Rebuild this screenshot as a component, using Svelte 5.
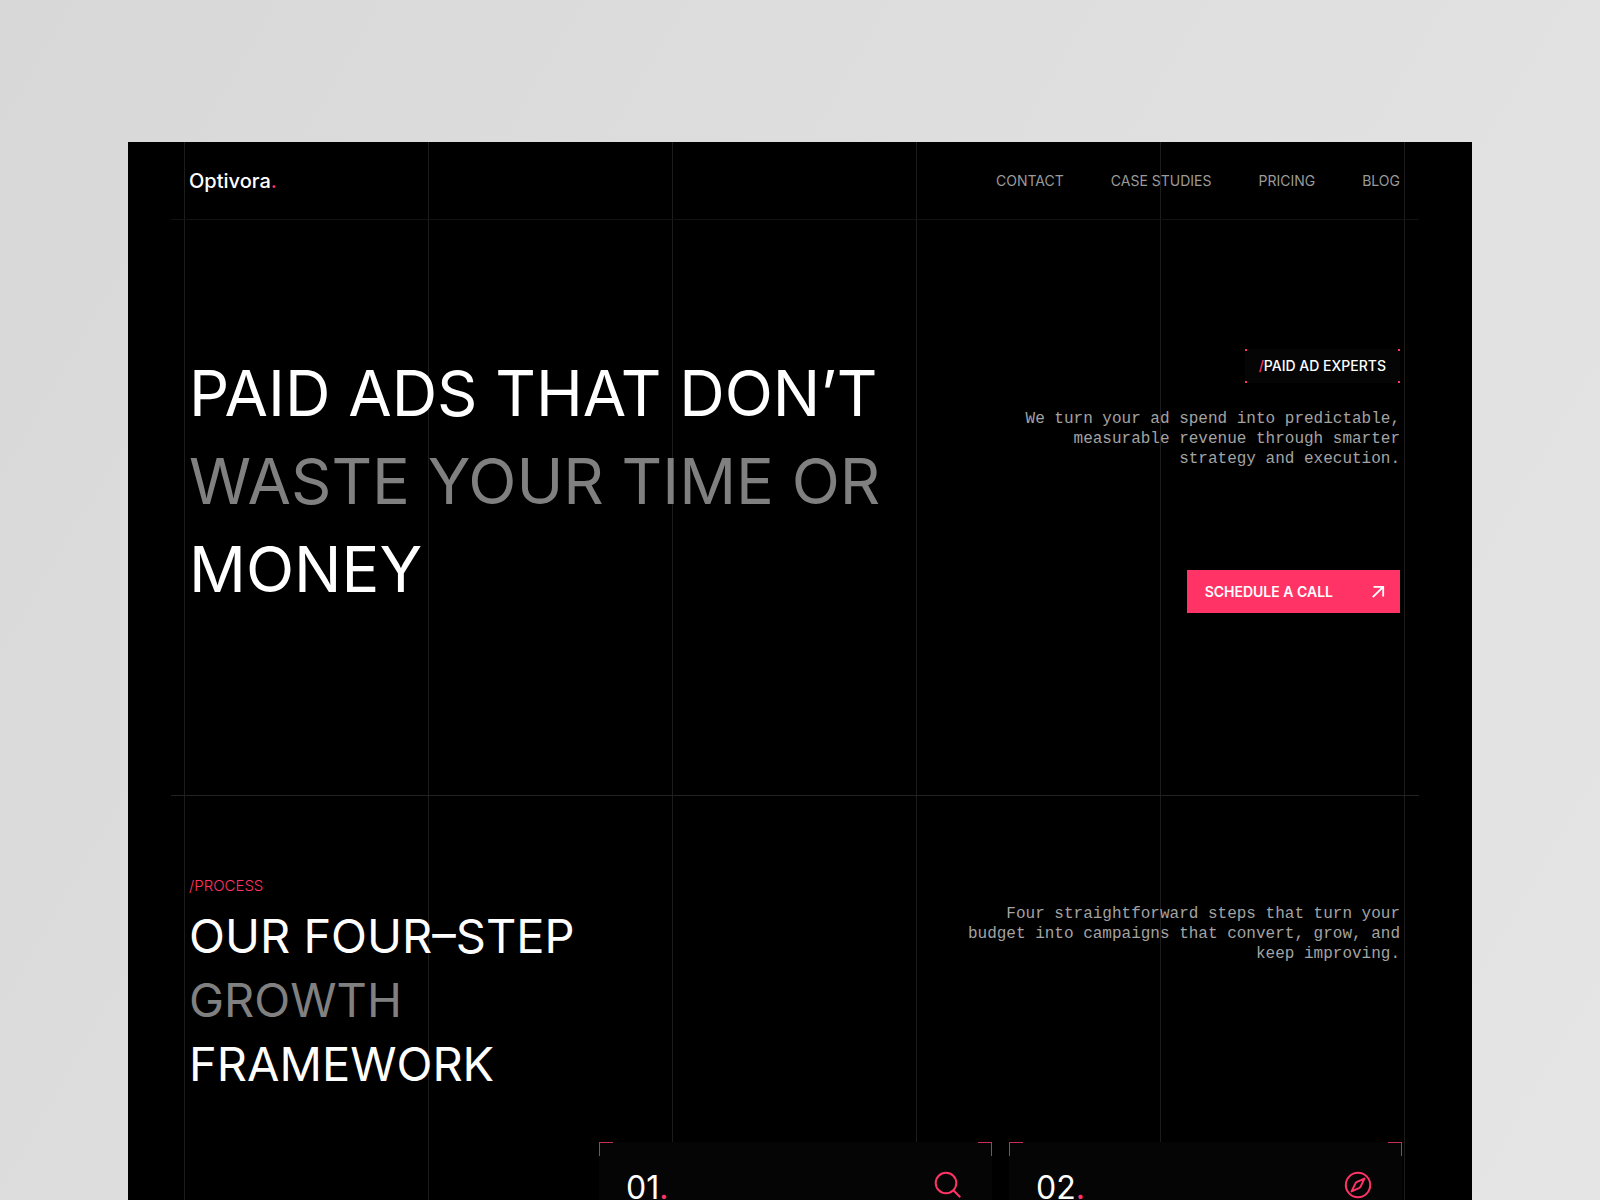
<script lang="ts">
	const navLinks: string[] = ['Contact', 'Case studies', 'Pricing', 'Blog'];

	const steps: { number: string; icon: 'search' | 'compass' }[] = [
		{ number: '01', icon: 'search' },
		{ number: '02', icon: 'compass' }
	];
</script>

<div class="page">
	<div class="panel">
		<div class="guides" aria-hidden="true">
			{#each Array(5) as _}
				<span></span>
			{/each}
		</div>

		<header class="row header">
			<a class="logo" href="/">Optivora<span class="accent">.</span></a>
			<nav>
				{#each navLinks as link}
					<a href="/">{link}</a>
				{/each}
			</nav>
		</header>

		<section class="row hero">
			<h1>
				Paid ads that don’t<br />
				<span class="muted">waste your time or</span><br />
				money
			</h1>
			<div class="hero-side">
				<p class="badge"><span class="accent">/</span>Paid ad experts</p>
				<p class="copy">
					We turn your ad spend into predictable,<br />
					measurable revenue through smarter<br />
					strategy and execution.
				</p>
				<button class="cta" type="button">
					Schedule a call
					<svg width="14" height="14" viewBox="0 0 14 14" aria-hidden="true">
						<path d="M1.8 12.2 12 2M2.5 1.8h9.7v9.7" />
					</svg>
				</button>
			</div>
		</section>

		<section class="row process">
			<p class="label">/Process</p>
			<h2>
				Our four–step<br />
				<span class="muted">growth</span><br />
				framework
			</h2>
			<p class="copy">
				Four straightforward steps that turn your<br />
				budget into campaigns that convert, grow, and<br />
				keep improving.
			</p>
			<div class="cards">
				{#each steps as { number, icon }}
					<article class="card">
						<h3>{number}<span class="accent">.</span></h3>
						<svg class="icon" width="28" height="28" viewBox="0 0 28 28" aria-hidden="true">
							{#if icon === 'search'}
								<circle cx="12" cy="12" r="10.3" />
								<path d="m19.3 19.3 7 7" />
							{:else}
								<circle cx="14" cy="14" r="12.2" />
								<path d="M20.4 7.6 13 10.8q-1.2.6-1.7 1.8L7.6 20.4 15 17.2q1.2-.6 1.7-1.8z" />
							{/if}
						</svg>
					</article>
				{/each}
			</div>
		</section>
	</div>
</div>

<style>
	:global(body) {
		margin: 0;
	}
	.page {
		--pink: #ff3366;
		box-sizing: border-box;
		height: 100vh;
		overflow: hidden;
		padding: 142px 8% 0;
		background: linear-gradient(120deg, #d8d8d8, #dfdfdf 50%, #e5e5e5);
		color: #fff;
		font-family: Inter, 'Liberation Sans', sans-serif;
	}
	.panel {
		position: relative;
		background: #000;
	}
	h1,
	h2,
	h3,
	p {
		margin: 0;
		font-weight: 400;
	}
	a {
		color: inherit;
		text-decoration: none;
	}
	.accent {
		color: var(--pink);
	}
	.muted {
		color: #808080;
	}

	/* Vertical guide lines behind the content */
	.guides {
		position: absolute;
		inset: 0 67px 0 56px;
		display: grid;
		grid-template-columns: repeat(5, 1fr);
		border-right: 1px solid #1c1c1c;
	}
	.guides span {
		border-left: 1px solid #1c1c1c;
	}

	.row {
		position: relative;
		margin: 0 53px 0 43px;
		padding: 0 19px 0 18px;
	}
	.header {
		display: flex;
		align-items: center;
		justify-content: space-between;
		height: 77px;
		border-bottom: 1px solid #121212;
	}
	.logo {
		font-size: 20px;
		font-weight: 500;
	}
	nav {
		display: flex;
		gap: 47px;
		color: #9a9a9a;
		font-size: 14px;
		text-transform: uppercase;
	}

	.hero {
		display: flex;
		justify-content: space-between;
		padding-top: 129px;
		padding-bottom: 182px;
		border-bottom: 1px solid #222;
	}
	h1 {
		font-size: 63px;
		line-height: 88px;
		text-transform: uppercase;
	}
	.hero-side {
		display: flex;
		flex-direction: column;
		align-items: flex-end;
	}
	.badge {
		/* A pink dot in every corner */
		--dot: linear-gradient(var(--pink), var(--pink));
		padding: 0 14px;
		background:
			var(--dot) 0 0 / 2px 2px no-repeat,
			var(--dot) 100% 0 / 2px 2px no-repeat,
			var(--dot) 0 100% / 2px 2px no-repeat,
			var(--dot) 100% 100% / 2px 2px no-repeat,
			#050505;
		font-size: 14px;
		font-weight: 500;
		line-height: 34px;
		text-transform: uppercase;
	}
	.copy {
		color: #a3a3a3;
		font-family: 'Liberation Mono', monospace;
		font-size: 16px;
		line-height: 20px;
		text-align: right;
	}
	.hero-side .copy {
		margin-top: 26px;
	}
	.cta {
		display: flex;
		align-items: center;
		justify-content: space-between;
		gap: 38px;
		height: 43px;
		margin-top: auto;
		padding: 0 15px 0 18px;
		border: 0;
		background: var(--pink);
		color: #fff;
		font-family: inherit;
		font-size: 14px;
		font-weight: 600;
		text-transform: uppercase;
		cursor: pointer;
	}
	.cta svg {
		fill: none;
		stroke: currentColor;
		stroke-width: 1.8;
	}

	.process {
		display: grid;
		grid-template-columns: 1fr auto;
		padding-top: 80px;
	}
	.label {
		grid-column: 1 / -1;
		margin-bottom: 8px;
		color: var(--pink);
		font-size: 15px;
		font-weight: 300;
		line-height: 20px;
		text-transform: uppercase;
	}
	h2 {
		font-size: 47px;
		line-height: 64px;
		text-transform: uppercase;
	}
	.cards {
		grid-column: 1 / -1;
		display: grid;
		grid-template-columns: 1fr 1fr;
		gap: 17px;
		margin: 46px -2px 0 410px;
	}
	.card {
		/* Bracket arms for the two upper corners */
		--arm: linear-gradient(#c62f56, #c62f56);
		display: flex;
		align-items: flex-start;
		justify-content: space-between;
		height: 240px;
		padding: 29px 30px 29px 27px;
		background:
			var(--arm) 0 0 / 14px 1px no-repeat,
			var(--arm) 0 0 / 1px 14px no-repeat,
			var(--arm) 100% 0 / 14px 1px no-repeat,
			var(--arm) 100% 0 / 1px 14px no-repeat,
			#050505;
	}
	h3 {
		font-size: 32px;
		line-height: 34px;
	}
	.icon {
		fill: none;
		stroke: var(--pink);
		stroke-width: 2;
		stroke-linejoin: round;
	}
</style>
